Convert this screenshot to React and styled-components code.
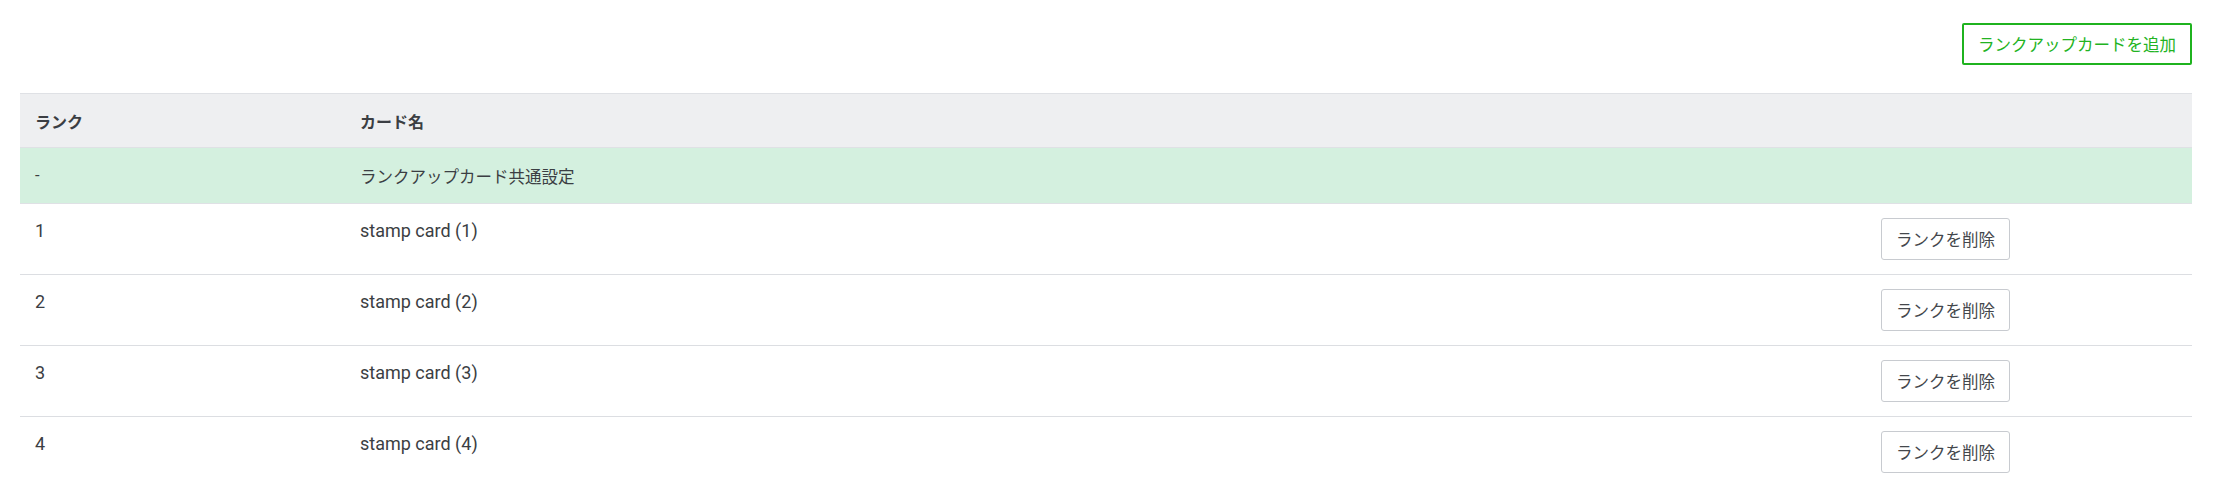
import React from 'react';
import styled, { createGlobalStyle } from 'styled-components';

const GlobalStyle = createGlobalStyle`
    body {
        margin: 0;
        background: #fff;
        font-family: Roboto, "Noto Sans CJK JP", sans-serif;
        color: #3b3e43;
    }
`;

const Page = styled.div`
    padding: 23px 26px 0 20px;
`;

const Toolbar = styled.div`
    display: flex;
    justify-content: flex-end;
    margin-bottom: 28px;
`;

const AddButton = styled.button`
    height: 42px;
    padding: 0 14px;
    border: 2px solid #1fb31f;
    border-radius: 2px;
    background: #fff;
    color: #22b322;
    font-family: Roboto, "Noto Sans CJK JP", sans-serif;
    font-size: 16.5px;
    cursor: pointer;
`;

const Table = styled.table`
    width: 100%;
    border-collapse: collapse;
    table-layout: fixed;
`;

const HeadCell = styled.th`
    box-sizing: border-box;
    height: 54px;
    padding: 0 15px;
    text-align: left;
    font-size: 16px;
    font-weight: 700;
    color: #3b3e43;
    background: #eeeff1;
    border-top: 1px solid #dfe1e5;
    border-bottom: 1px solid #dfe1e5;
    width: ${props => props.width || 'auto'};
`;

const CommonRow = styled.tr`
    background: #d4f0df;
`;

const CommonCell = styled.td`
    height: 55px;
    padding: 0 15px;
    font-size: 16.5px;
    vertical-align: middle;
    border-bottom: 1px solid #dfe1e5;
`;

const Row = styled.tr`
    &:last-child td {
        border-bottom: none;
    }
`;

const Cell = styled.td`
    padding: 15px 15px 14px;
    font-size: 18px;
    line-height: 24px;
    vertical-align: top;
    border-bottom: 1px solid #dcdee2;
`;

const ActionCell = styled(Cell)`
    padding-top: 14px;
`;

const DeleteButton = styled.button`
    display: block;
    height: 42px;
    width: 129px;
    padding: 0;
    border: 1px solid #c8cbd0;
    border-radius: 3px;
    background: #fff;
    color: #44474c;
    font-family: Roboto, "Noto Sans CJK JP", sans-serif;
    font-size: 16.5px;
    cursor: pointer;
`;

const ranks = [1, 2, 3, 4];

const App = () => {
    return (
        <>
            <GlobalStyle />
            <Page>
                <Toolbar>
                    <AddButton>ランクアップカードを追加</AddButton>
                </Toolbar>
                <Table>
                    <thead>
                        <tr>
                            <HeadCell width='325px'>ランク</HeadCell>
                            <HeadCell>カード名</HeadCell>
                            <HeadCell width='326px'></HeadCell>
                        </tr>
                    </thead>
                    <tbody>
                        <CommonRow>
                            <CommonCell>-</CommonCell>
                            <CommonCell>ランクアップカード共通設定</CommonCell>
                            <CommonCell></CommonCell>
                        </CommonRow>
                        {ranks.map(rank => (
                            <Row key={rank}>
                                <Cell>{rank}</Cell>
                                <Cell>stamp card ({rank})</Cell>
                                <ActionCell>
                                    <DeleteButton>ランクを削除</DeleteButton>
                                </ActionCell>
                            </Row>
                        ))}
                    </tbody>
                </Table>
            </Page>
        </>
    );
};

export default App;
